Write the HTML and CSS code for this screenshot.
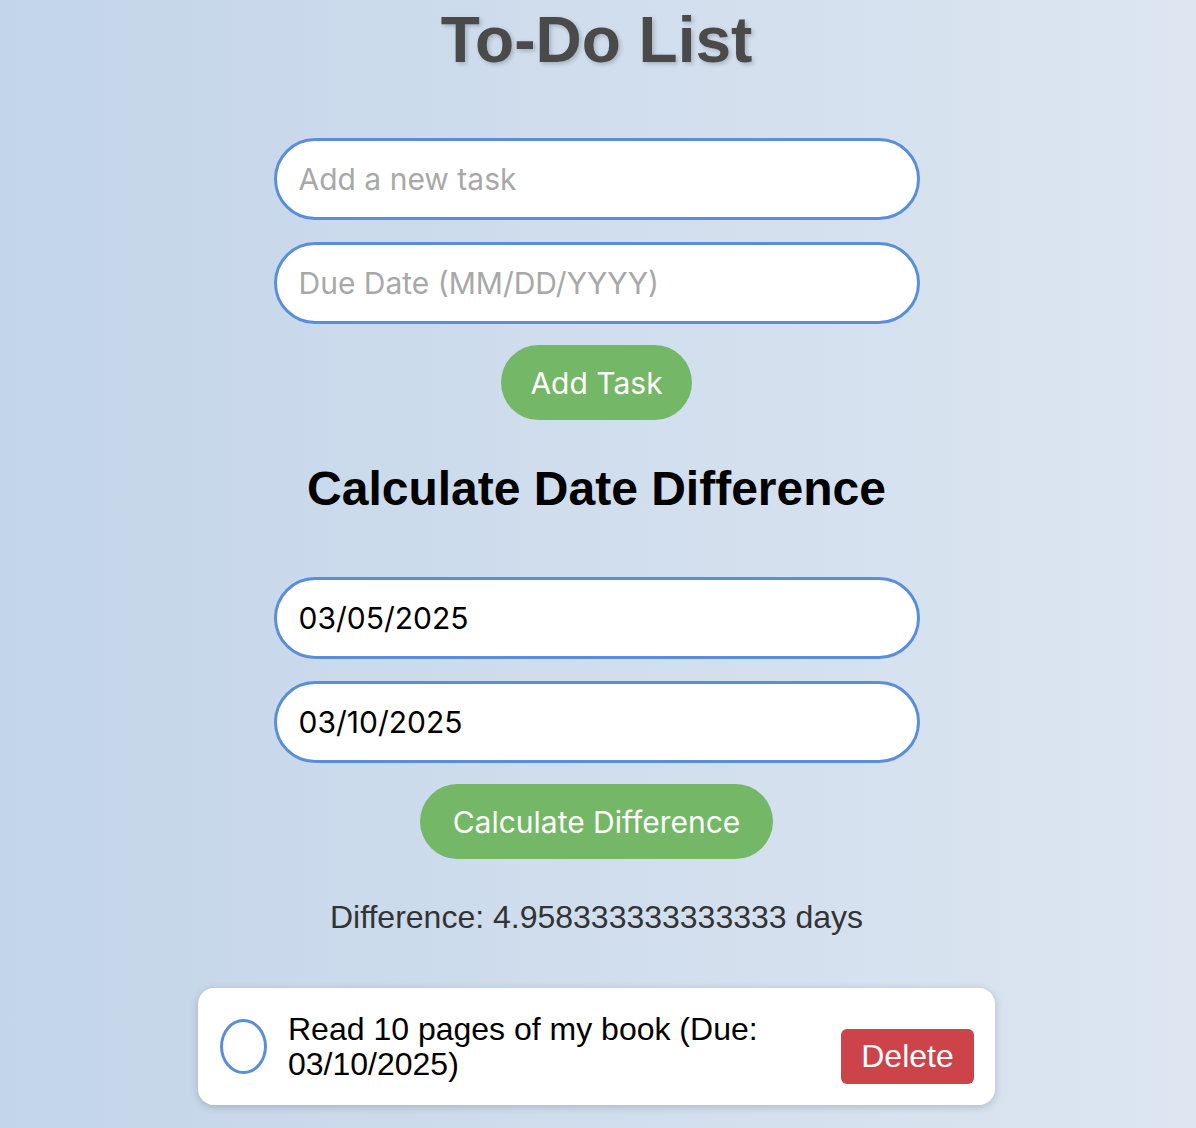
FILE: index.html
```html
<!DOCTYPE html>
<html lang="en">
<head>
<meta charset="utf-8">
<title>To-Do List</title>
<link rel="stylesheet" href="styles.css">
</head>
<body>
<main class="app">
  <h1 class="title">To-Do List</h1>
  <div class="form">
    <input class="field" type="text" placeholder="Add a new task">
    <input class="field" type="text" placeholder="Due Date (MM/DD/YYYY)">
    <button class="btn-green btn-add">Add Task</button>
  </div>
  <h2 class="subtitle">Calculate Date Difference</h2>
  <div class="form form-diff">
    <input class="field" type="text" value="03/05/2025">
    <input class="field" type="text" value="03/10/2025">
    <button class="btn-green btn-calc">Calculate Difference</button>
  </div>
  <p class="result">Difference: 4.958333333333333 days</p>
  <ul class="tasks">
    <li class="task">
      <span class="check"></span>
      <span class="task-text">Read 10 pages of my book (Due: 03/10/2025)</span>
      <button class="btn-delete">Delete</button>
    </li>
  </ul>
</main>
</body>
</html>
```

FILE: styles.css
```css
html, body {
  margin: 0;
  padding: 0;
}
body {
  width: 1196px;
  height: 1128px;
  overflow: hidden;
  background: linear-gradient(to right, #c3d5e9, #dde6f1);
  font-family: "Liberation Sans", Arial, sans-serif;
}
.app {
  display: flex;
  flex-direction: column;
  align-items: center;
  padding-top: 3px;
  padding-right: 3px;
}
.title {
  margin: 0;
  font-size: 64px;
  line-height: 74px;
  font-weight: bold;
  color: #4a4a4a;
  text-shadow: 2px 2px 4px rgba(0, 0, 0, 0.2);
}
.form {
  display: flex;
  flex-direction: column;
  align-items: center;
  gap: 22px;
  margin-top: 61px;
}
.field {
  box-sizing: border-box;
  width: 646px;
  height: 82px;
  border: 3px solid #5b8ed9;
  border-radius: 41px;
  background: #fff;
  padding: 0 22px;
  font-family: Inter, "Noto Sans", sans-serif;
  font-size: 30px;
  color: #000;
  outline: none;
}
.field::placeholder {
  color: #a8a8a8;
}
.btn-green {
  height: 75px;
  border: none;
  border-radius: 38px;
  background: #74b766;
  color: #fff;
  font-family: Inter, "Noto Sans", sans-serif;
  font-size: 30px;
  padding: 0;
  margin-top: -1px;
}
.btn-add {
  width: 191px;
}
.btn-calc {
  width: 353px;
}
.subtitle {
  margin: 41px 0 0;
  font-size: 48px;
  line-height: 56px;
  font-weight: bold;
  color: #000;
}
.form-diff {
  margin-top: 60px;
}
.result {
  margin: 40px 0 0;
  font-size: 32px;
  line-height: 37px;
  color: #333;
}
.tasks {
  list-style: none;
  margin: 52px 0 0;
  padding: 0;
}
.task {
  box-sizing: border-box;
  width: 797px;
  min-height: 117px;
  background: #fff;
  border-radius: 16px;
  box-shadow: 0 2px 8px rgba(0, 0, 0, 0.18);
  display: flex;
  align-items: center;
  padding: 20px 21px 20px 22px;
}
.check {
  box-sizing: border-box;
  flex: none;
  width: 47px;
  height: 55px;
  border: 3px solid #5b8ed9;
  border-radius: 50%;
}
.task-text {
  flex: 1;
  margin-left: 21px;
  font-size: 32px;
  line-height: 35px;
  color: #000;
  padding-right: 60px;
}
.btn-delete {
  flex: none;
  width: 133px;
  height: 55px;
  margin-top: 20px;
  border: none;
  border-radius: 6px;
  background: #cc444a;
  color: #fff;
  font-family: "Liberation Sans", Arial, sans-serif;
  font-size: 32px;
  padding: 0;
}
```
